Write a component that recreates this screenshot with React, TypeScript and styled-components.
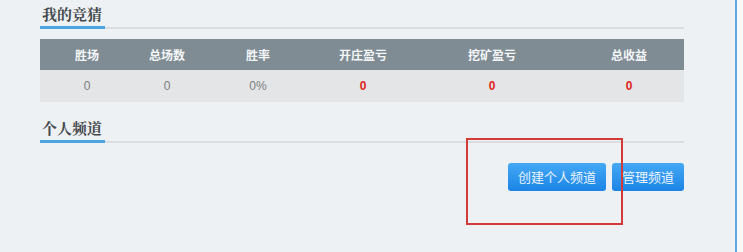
import React from 'react';
import styled, { createGlobalStyle } from 'styled-components';

const GlobalStyle = createGlobalStyle`
  html, body {
    margin: 0;
    padding: 0;
    background: #f6f8f9;
  }
  * {
    box-sizing: border-box;
  }
`;

const Page = styled.div`
  display: flex;
  width: 743px;
  height: 252px;
  overflow: hidden;
  font-family: "Liberation Sans", "Noto Sans CJK SC", sans-serif;
`;

const Panel = styled.div`
  position: relative;
  flex: 0 0 737px;
  height: 100%;
  padding: 4px 51px 0 40px;
  background: #eef1f3;
  border-right: 2px solid #5ea9e4;
`;

const SectionHeader = styled.div<{ $top: number }>`
  display: flex;
  margin-top: ${({ $top }) => $top}px;
  border-bottom: 2px solid #dadee1;
`;

const SectionTitle = styled.h3`
  margin: 0 0 -2px;
  width: 65px;
  padding: 0 0 2px 2px;
  font-family: "Noto Serif CJK SC", "Noto Sans CJK SC", serif;
  font-size: 15px;
  line-height: 20px;
  font-weight: 700;
  color: #444a4e;
  border-bottom: 3px solid #4ba3e0;
`;

const Table = styled.div`
  margin-top: 10px;
  display: grid;
  grid-template-columns: 94px 66px 116px 94px 164px 110px;
`;

const HeadCell = styled.div`
  height: 31px;
  display: flex;
  align-items: center;
  justify-content: center;
  background: #7f8c94;
  color: #f4f6f8;
  font-family: "Noto Sans CJK SC", sans-serif;
  font-size: 12px;
  font-weight: 700;
`;

const Cell = styled.div<{ $loss?: boolean }>`
  height: 32px;
  display: flex;
  align-items: center;
  justify-content: center;
  background: #e4e5e6;
  color: ${({ $loss }) => ($loss ? '#e02424' : '#7a7d80')};
  font-family: "Liberation Sans", sans-serif;
  font-size: 12px;
  font-weight: ${({ $loss }) => ($loss ? 700 : 400)};
`;

const ButtonRow = styled.div`
  display: flex;
  justify-content: flex-end;
  gap: 6px;
  margin-top: 20px;
`;

const Button = styled.button`
  height: 28px;
  padding: 0 10px;
  border: none;
  border-radius: 3px;
  background: linear-gradient(#45a8f4, #1b85e6);
  color: #eaf4ff;
  font-family: "Noto Sans CJK SC", sans-serif;
  font-size: 13px;
  line-height: 28px;
  cursor: pointer;
`;

const Highlight = styled.div`
  position: absolute;
  left: 466px;
  top: 138px;
  width: 157px;
  height: 87px;
  border: 2px solid #d33a3a;
  pointer-events: none;
`;

const Filler = styled.div`
  flex: 1;
  background: #f6f8f9;
`;

const heads = ['胜场', '总场数', '胜率', '开庄盈亏', '挖矿盈亏', '总收益'];
const values: { text: string; loss?: boolean }[] = [
  { text: '0' },
  { text: '0' },
  { text: '0%' },
  { text: '0', loss: true },
  { text: '0', loss: true },
  { text: '0', loss: true },
];

const App: React.FC = () => {
  return (
    <>
      <GlobalStyle />
      <Page>
        <Panel>
          <SectionHeader $top={0}>
            <SectionTitle>我的竞猜</SectionTitle>
          </SectionHeader>
          <Table>
            {heads.map((h) => (
              <HeadCell key={h}>{h}</HeadCell>
            ))}
            {values.map((v, i) => (
              <Cell key={i} $loss={v.loss}>
                {v.text}
              </Cell>
            ))}
          </Table>
          <SectionHeader $top={16}>
            <SectionTitle>个人频道</SectionTitle>
          </SectionHeader>
          <ButtonRow>
            <Button>创建个人频道</Button>
            <Button>管理频道</Button>
          </ButtonRow>
          <Highlight />
        </Panel>
        <Filler />
      </Page>
    </>
  );
};

export default App;
